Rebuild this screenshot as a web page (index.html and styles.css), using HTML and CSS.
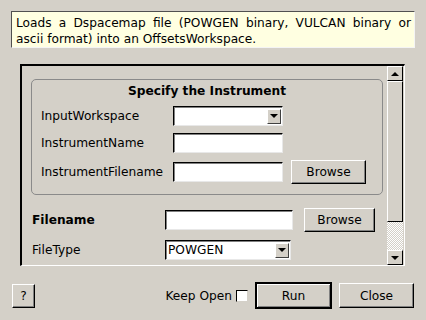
FILE: index.html
```html
<!DOCTYPE html>
<html lang="en">
<head>
    <meta charset="UTF-8">
    <title>LoadDspacemap</title>
    <link rel="stylesheet" href="styles.css">
</head>
<body>
  <div class="dialog">
    <div class="tooltip">
      <span class="tip-line first">Loads a Dspacemap file (POWGEN binary, VULCAN binary or</span>
      <span class="tip-line">ascii format) into an OffsetsWorkspace.</span>
    </div>

    <div class="scroll-area">
      <div class="scroll-content">
        <div class="group">
          <div class="group-title">Specify the Instrument</div>
          <div class="row">
            <label class="label">InputWorkspace</label>
            <div class="combo"><span class="combo-text"></span><span class="combo-arrow"></span></div>
          </div>
          <div class="row">
            <label class="label">InstrumentName</label>
            <input type="text" class="field">
          </div>
          <div class="row tall">
            <label class="label">InstrumentFilename</label>
            <input type="text" class="field">
            <button class="btn browse">Browse</button>
          </div>
        </div>

        <div class="row tall outer">
          <label class="label bold">Filename</label>
          <input type="text" class="field wide">
          <button class="btn browse2">Browse</button>
        </div>
        <div class="row outer">
          <label class="label">FileType</label>
          <div class="combo filetype"><span class="combo-text">POWGEN</span><span class="combo-arrow"></span></div>
        </div>
      </div>

      <!-- vertical scrollbar -->
      <div class="scrollbar">
        <div class="sb-btn"><span class="tri up"></span></div>
        <div class="sb-handle"></div>
        <div class="sb-track"></div>
        <div class="sb-btn"><span class="tri down"></span></div>
      </div>
    </div>

    <div class="footer">
      <button class="btn help">?</button>
      <div class="spacer"></div>
      <label class="keep">Keep Open <span class="check"></span></label>
      <button class="btn run">Run</button>
      <button class="btn close">Close</button>
    </div>
  </div>
</body>
</html>
```

FILE: styles.css
```css
body {
    margin: 0;
    background: #d4d0c8;
    font-family: "DejaVu Sans", sans-serif;
    font-size: 12.2px;
    color: #000;
}
.dialog {
    width: 426px;
    height: 320px;
    padding-top: 11px;
    box-sizing: border-box;
}
.tooltip {
    margin: 0 11px;
    height: 37px;
    box-sizing: border-box;
    padding: 3px 3px 0 4px;
    background: #ffffe1;
    border: 1px solid;
    border-color: #505050 #f4f4f4 #f4f4f4 #505050;
    line-height: 16px;
}
.tip-line {
    display: block;
}
.tip-line.first {
    text-align: justify;
    text-align-last: justify;
}
.scroll-area {
    display: flex;
    margin: 16px 0 0 20px;
    width: 385px;
    height: 202px;
    box-sizing: border-box;
    border-top: 2px solid #000;
    border-left: 2px solid #000;
    border-right: 1px solid #fff;
    border-bottom: 1px solid #fff;
}
.scroll-content {
    flex: 1;
    overflow: hidden;
    padding: 13px 0 0 9px;
}
.group {
    width: 352px;
    height: 116px;
    box-sizing: border-box;
    border: 1px solid #8a8a8a;
    border-radius: 5px;
    padding: 3px 0 0 9px;
}
.group-title {
    font-weight: bold;
    text-align: center;
    line-height: 17px;
    margin-bottom: 6px;
    padding-right: 9px;
}
.row {
    display: flex;
    align-items: center;
    height: 20px;
    margin-bottom: 7px;
}
.row.tall {
    height: 24px;
    margin-top: 2px;
}
.label {
    width: 132px;
    flex-shrink: 0;
}
.outer .label {
    width: 133px;
    padding-left: 1px;
}
.outer.tall {
    margin-top: 13px;
    margin-bottom: 8px;
}
.bold {
    font-weight: bold;
}
.field {
    width: 110px;
    height: 20px;
    box-sizing: border-box;
    margin: 0;
    padding: 0 2px;
    background: #fff;
    border: 1px solid;
    border-color: #000 #e8e8e8 #e8e8e8 #000;
    box-shadow: inset 1px 1px 0 #808080;
    font: inherit;
}
.field.wide {
    width: 128px;
}
.combo {
    width: 110px;
    height: 20px;
    box-sizing: border-box;
    display: flex;
    align-items: center;
    background: #fff;
    border: 1px solid;
    border-color: #000 #e8e8e8 #e8e8e8 #000;
    box-shadow: inset 1px 1px 0 #808080;
}
.combo.filetype {
    width: 126px;
}
.combo-text {
    flex: 1;
    padding-left: 2px;
}
.combo-arrow {
    width: 14px;
    height: 15px;
    margin-right: 1px;
    box-sizing: border-box;
    background: #d4d0c8;
    border: 1px solid;
    border-color: #fff #404040 #404040 #fff;
    display: flex;
    align-items: center;
    justify-content: center;
}
.combo-arrow::after {
    content: "";
    border-left: 4px solid transparent;
    border-right: 4px solid transparent;
    border-top: 4px solid #000;
}
.btn {
    height: 24px;
    box-sizing: border-box;
    margin: 0;
    padding: 0;
    background: #d4d0c8;
    border: 1px solid;
    border-color: #fff #000 #000 #fff;
    box-shadow: inset -1px -1px 0 #808080;
    font: inherit;
    color: #000;
}
.browse {
    width: 75px;
    margin-left: 8px;
}
.browse2 {
    width: 71px;
    margin-left: 11px;
}
.scrollbar {
    width: 16px;
    display: flex;
    flex-direction: column;
    margin-right: 1px;
}
.sb-btn {
    height: 15px;
    box-sizing: border-box;
    border: 1px solid;
    border-color: #fff #000 #000 #fff;
    background: #d4d0c8;
    display: flex;
    align-items: center;
    justify-content: center;
}
.tri {
    border-left: 4px solid transparent;
    border-right: 4px solid transparent;
}
.tri.up {
    border-bottom: 4px solid #000;
}
.tri.down {
    border-top: 4px solid #000;
}
.sb-handle {
    height: 141px;
    box-sizing: border-box;
    border: 1px solid;
    border-color: #fff #000 #000 #fff;
    background: #d4d0c8;
}
.sb-track {
    flex: 1;
    background: repeating-conic-gradient(#fff 0 25%, #d4d0c8 0 50%) 0 0 / 2px 2px;
}
.footer {
    display: flex;
    align-items: center;
    margin-top: 16px;
    padding: 0 12px;
}
.help {
    width: 23px;
}
.spacer {
    flex: 1;
}
.keep {
    display: flex;
    align-items: center;
}
.check {
    width: 12px;
    height: 12px;
    box-sizing: border-box;
    margin-left: 4px;
    background: #fff;
    border: 1px solid;
    border-color: #000 #d4d0c8 #d4d0c8 #000;
}
.run {
    width: 77px;
    height: 27px;
    margin-left: 7px;
    border: 2px solid #000;
    box-shadow: inset 1px 1px 0 #fff, inset -1px -1px 0 #808080;
}
.close {
    width: 75px;
    height: 25px;
    margin-left: 7px;
}
```
